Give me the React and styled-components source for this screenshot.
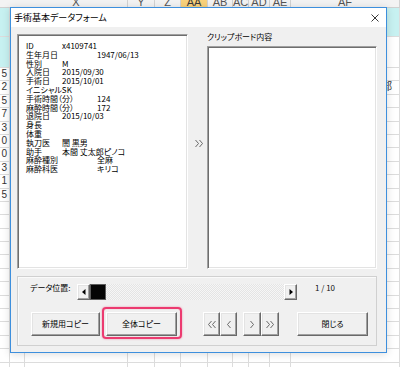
import React from "react";
import styled, { createGlobalStyle } from "styled-components";

const GlobalStyle = createGlobalStyle`
  html, body {
    margin: 0;
    padding: 0;
    background: #fff;
  }
  body {
    font-family: "Noto Sans CJK JP", "Liberation Sans", sans-serif;
  }
`;

const CYAN = "#c7f1f1";
const UI_FONT = `"Noto Sans CJK JP", "Liberation Sans", sans-serif`;

const COLS = [
  { w: 10 },
  { w: 15 },
  { w: 103, label: "X" },
  { w: 27, label: "Y" },
  { w: 26, label: "Z" },
  { w: 27, label: "AA", active: true },
  { w: 25, label: "AB" },
  { w: 16, label: "AC" },
  { w: 21, label: "AD" },
  { w: 21, label: "AE" },
  { w: 109, label: "AF" },
];

const ROW_NUMBERS = ["5", "2", "5", "7", "3", "0", "0", "3", "1", "5"];

const RECORD = [
  ["ID", "x4109741", 36],
  ["生年月日", "1947/06/13", 71],
  ["性別", "M", 36],
  ["入院日", "2015/09/30", 36],
  ["手術日", "2015/10/01", 36],
  ["イニシャルSK"],
  ["手術時間（分）", "124", 71],
  ["麻酔時間（分）", "172", 71],
  ["退院日", "2015/10/03", 36],
  ["身長"],
  ["体重"],
  ["執刀医", "闇 黒男", 36],
  ["助手", "本間 丈太郎ピノコ", 36],
  ["麻酔種別", "全麻", 71],
  ["麻酔科医", "キリコ", 71],
];

function Chevrons({ dir = "left", double = false }) {
  const w = double ? 8 : 4;
  const one = dir === "left" ? "3.5,0 0.5,3.5 3.5,7" : "0.5,0 3.5,3.5 0.5,7";
  const two = dir === "left" ? "7.5,0 4.5,3.5 7.5,7" : "4.5,0 7.5,3.5 4.5,7";
  return (
    <svg width={w} height="7" viewBox={`0 0 ${w} 7`}>
      <polyline points={one} fill="none" stroke="#5a5a5a" strokeWidth="0.9" />
      {double && <polyline points={two} fill="none" stroke="#5a5a5a" strokeWidth="0.9" />}
    </svg>
  );
}

function Triangle({ dir }) {
  return (
    <svg width="4" height="6" viewBox="0 0 4 6">
      <polygon points={dir === "left" ? "3.5,0 0,3 3.5,6" : "0.5,0 4,3 0.5,6"} fill="#000" />
    </svg>
  );
}

function App() {
  const rows = Array.from({ length: 24 });

  return (
    <>
      <GlobalStyle />
      <Sheet>
        <HeaderRow>
          {COLS.map((c, i) => (
            <HeaderCell key={i} $w={c.w} $active={c.active} $plain={!c.label}>
              {c.label}
            </HeaderCell>
          ))}
        </HeaderRow>
        <SheetRow $h={29}>
          {COLS.map((c, i) => (
            <Cell key={i} $w={c.w} $bg={CYAN} />
          ))}
        </SheetRow>
        <SheetRow $h={31}>
          {COLS.map((c, i) => (
            <Cell key={i} $w={c.w} $bg={i < 2 ? CYAN : "#fff"} />
          ))}
        </SheetRow>
        {rows.map((_, r) => (
          <SheetRow key={r} $h={13.4}>
            {COLS.map((c, i) => (
              <Cell key={i} $w={c.w} $align={i === 0 ? "right" : "left"} $indent={i === 10 ? 91 : 0}>
                {i === 0 && ROW_NUMBERS[r]}
                {i === 10 && r === 1 && "部"}
              </Cell>
            ))}
          </SheetRow>
        ))}

        <Dialog>
          <TitleBar>
            <Title>手術基本データフォーム</Title>
            <CloseButton>
              <svg width="8" height="8" viewBox="0 0 8 8">
                <path d="M0.5 0.5 L7.5 7.5 M7.5 0.5 L0.5 7.5" stroke="#222" strokeWidth="0.9" />
              </svg>
            </CloseButton>
          </TitleBar>

          <Body>
            <TopArea>
              <RecordBox>
                {RECORD.map(([label, value, at], i) => (
                  <Line key={i}>
                    <LineLabel $w={value ? at : undefined}>{label}</LineLabel>
                    {value && <span>{value}</span>}
                  </Line>
                ))}
              </RecordBox>

              <ArrowColumn>
                <Chevrons dir="right" double />
              </ArrowColumn>

              <RightColumn>
                <FieldLabel>クリップボード内容</FieldLabel>
                <ClipboardBox />
              </RightColumn>
            </TopArea>

            <Frame>
              <ScrollRow>
                <ScrollLabel>データ位置:</ScrollLabel>
                <ScrollBar>
                  <ScrollButton>
                    <Triangle dir="left" />
                  </ScrollButton>
                  <Thumb />
                  <Track />
                  <ScrollButton>
                    <Triangle dir="right" />
                  </ScrollButton>
                </ScrollBar>
                <Counter>1 / 10</Counter>
              </ScrollRow>

              <ButtonRow>
                <Button $w={69}>新規用コピー</Button>
                <HighlightWrap>
                  <Button $w={71}>全体コピー</Button>
                  <Highlight />
                </HighlightWrap>
                <NavGroup>
                  <Button $w={17}>
                    <Chevrons dir="left" double />
                  </Button>
                  <Button $w={17}>
                    <Chevrons dir="left" />
                  </Button>
                </NavGroup>
                <NavGroup $gap={6}>
                  <Button $w={18}>
                    <Chevrons dir="right" />
                  </Button>
                  <Button $w={18}>
                    <Chevrons dir="right" double />
                  </Button>
                </NavGroup>
                <CloseAction $w={71}>閉じる</CloseAction>
              </ButtonRow>
            </Frame>
          </Body>
        </Dialog>
      </Sheet>
    </>
  );
}

export default App;

const Sheet = styled.div`
  position: relative;
  width: 400px;
  height: 367px;
  overflow: hidden;
  background: #fff;
  font-family: "Liberation Sans", Arial, sans-serif;
`;

const HeaderRow = styled.div`
  display: flex;
  height: 8px;
  box-sizing: border-box;
  background: #f3f3f3;
  border-bottom: 1px solid #d0d0d0;
  overflow: hidden;
`;

const HeaderCell = styled.div`
  flex: none;
  width: ${(p) => p.$w}px;
  box-sizing: border-box;
  border-right: 1px solid ${(p) => (p.$plain ? "transparent" : "#d2d2d2")};
  background: ${(p) => (p.$active ? "#f8d27c" : "transparent")};
  color: ${(p) => (p.$active ? "#3a3a3a" : "#555")};
  font-size: 11px;
  line-height: 5px;
  text-align: center;
`;

const SheetRow = styled.div`
  display: flex;
  height: ${(p) => p.$h}px;
  box-sizing: border-box;
  border-bottom: 1px solid #dcdcdc;
`;

const Cell = styled.div`
  flex: none;
  width: ${(p) => p.$w}px;
  box-sizing: border-box;
  border-right: 1px solid #dcdcdc;
  background: ${(p) => p.$bg || "#fff"};
  color: #333;
  font-family: "Liberation Sans", "Noto Sans CJK JP", sans-serif;
  font-size: 10px;
  line-height: 12px;
  text-align: ${(p) => p.$align || "left"};
  padding-right: ${(p) => (p.$align === "right" ? 2 : 0)}px;
  padding-left: ${(p) => p.$indent || 0}px;
  white-space: nowrap;
  overflow: hidden;
`;

const Dialog = styled.div`
  position: absolute;
  top: 7px;
  left: 10px;
  width: 377px;
  height: 346px;
  box-sizing: border-box;
  border: 1px solid #3d8fdd;
  background: #f0f0f0;
  box-shadow: 0 1px 8px rgba(0, 0, 0, 0.15);
  display: flex;
  flex-direction: column;
  font-family: ${UI_FONT};
  font-feature-settings: "palt";
  color: #000;
`;

const TitleBar = styled.div`
  display: flex;
  align-items: center;
  justify-content: space-between;
  height: 19px;
  background: #fff;
  padding-left: 3px;
`;

const Title = styled.div`
  font-size: 9px;
  line-height: 10px;
`;

const CloseButton = styled.div`
  width: 22px;
  height: 19px;
  display: flex;
  align-items: center;
  justify-content: center;
`;

const Body = styled.div`
  flex: 1;
  display: flex;
  flex-direction: column;
  padding: 7px 9px 6px 6px;
`;

const TopArea = styled.div`
  display: flex;
  height: 235px;
`;

const Sunken = styled.div`
  box-sizing: border-box;
  background: #fff;
  border: 1px solid;
  border-color: #a0a0a0 #fff #fff #a0a0a0;
  box-shadow: inset 1px 1px 0 #6e6e6e, inset -1px -1px 0 #e3e3e3;
`;

const RecordBox = styled(Sunken)`
  width: 171px;
  padding: 7px 4px 0 8px;
`;

const Line = styled.div`
  display: flex;
  height: 8.8px;
  font-size: 8px;
  line-height: 8.8px;
  white-space: nowrap;
`;

const LineLabel = styled.span`
  flex: none;
  width: ${(p) => (p.$w ? `${p.$w}px` : "auto")};
`;

const ArrowColumn = styled.div`
  width: 19px;
  display: flex;
  align-items: center;
  justify-content: center;
  padding: 0 0 17px 2px;
  box-sizing: border-box;
`;

const RightColumn = styled.div`
  width: 170px;
  display: flex;
  flex-direction: column;
`;

const FieldLabel = styled.div`
  height: 13px;
  margin-top: -1px;
  font-size: 8px;
  line-height: 8px;
`;

const ClipboardBox = styled(Sunken)`
  flex: 1;
`;

const Frame = styled.div`
  margin-top: 7px;
  height: 70px;
  box-sizing: border-box;
  border: 1px solid #d0d0d0;
  box-shadow: inset 1px 1px 0 #fafafa;
  padding: 7px 0 0 12px;
  display: flex;
  flex-direction: column;
`;

const ScrollRow = styled.div`
  display: flex;
  align-items: flex-start;
  height: 16px;
`;

const ScrollLabel = styled.div`
  width: 47px;
  font-size: 8px;
  line-height: 8px;
`;

const ScrollBar = styled.div`
  display: flex;
  width: 220px;
  height: 16px;
`;

const Raised = styled.div`
  box-sizing: border-box;
  background: #f0f0f0;
  border: 1px solid;
  border-color: #fff #696969 #696969 #fff;
  box-shadow: inset -1px -1px 0 #a0a0a0, inset 1px 1px 0 #e3e3e3;
  display: flex;
  align-items: center;
  justify-content: center;
`;

const ScrollButton = styled(Raised)`
  width: 13px;
  height: 16px;
`;

const Thumb = styled.div`
  width: 16px;
  height: 16px;
  box-sizing: border-box;
  background: #050505;
  border: 1px solid #5c5c5c;
`;

const Track = styled.div`
  flex: 1;
  background: repeating-conic-gradient(#e4e4e4 0 25%, #f6f6f6 0 50%) 0 0 / 2px 2px;
`;

const Counter = styled.div`
  margin-left: 18px;
  font-size: 8px;
  line-height: 8px;
  color: #111;
`;

const ButtonRow = styled.div`
  display: flex;
  margin: 12px 0 0 1px;
  gap: 6px;
`;

const Button = styled(Raised).attrs({ as: "button" })`
  width: ${(p) => p.$w}px;
  height: 24px;
  padding: 0;
  margin: 0;
  font-family: ${UI_FONT};
  font-feature-settings: "palt";
  font-size: 8px;
  line-height: 1;
  color: #000;
`;

const CloseAction = styled(Button)`
  margin-left: 12px;
`;

const HighlightWrap = styled.div`
  position: relative;
  display: flex;
`;

const Highlight = styled.span`
  position: absolute;
  top: -5px;
  left: -4px;
  right: -5px;
  bottom: -3px;
  border: 2px solid #ec3b70;
  border-radius: 4px;
  box-shadow: 0 0 2px rgba(236, 59, 112, 0.6), inset 0 0 1px rgba(236, 59, 112, 0.5);
  pointer-events: none;
`;

const NavGroup = styled.div`
  display: flex;
  margin-left: ${(p) => (p.$gap ? 0 : 20)}px;
`;
